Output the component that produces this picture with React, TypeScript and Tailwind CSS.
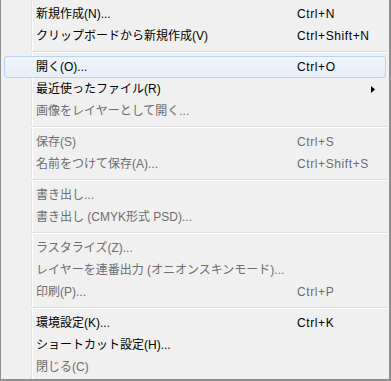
type Item =
  | { sep: true }
  | {
      sep?: false;
      label: string;
      shortcut?: string;
      disabled?: boolean;
      active?: boolean;
      submenu?: boolean;
    };

const items: Item[] = [
  { label: "新規作成(N)...", shortcut: "Ctrl+N" },
  { label: "クリップボードから新規作成(V)", shortcut: "Ctrl+Shift+N" },
  { sep: true },
  { label: "開く(O)...", shortcut: "Ctrl+O", active: true },
  { label: "最近使ったファイル(R)", submenu: true },
  { label: "画像をレイヤーとして開く...", disabled: true },
  { sep: true },
  { label: "保存(S)", shortcut: "Ctrl+S", disabled: true },
  { label: "名前をつけて保存(A)...", shortcut: "Ctrl+Shift+S", disabled: true },
  { sep: true },
  { label: "書き出し...", disabled: true },
  { label: "書き出し (CMYK形式 PSD)...", disabled: true },
  { sep: true },
  { label: "ラスタライズ(Z)...", disabled: true },
  { label: "レイヤーを連番出力 (オニオンスキンモード)...", disabled: true },
  { label: "印刷(P)...", shortcut: "Ctrl+P", disabled: true },
  { sep: true },
  { label: "環境設定(K)...", shortcut: "Ctrl+K" },
  { label: "ショートカット設定(H)..." },
  { label: "閉じる(C)", disabled: true },
];

export default function App() {
  return (
    <div
      className="w-[391px] h-[381px] bg-[#f0f0f0] border-l border-r-2 border-b-2 border-[#8f8f8f] text-[12px] leading-none overflow-hidden"
      style={{ fontFamily: '"Liberation Sans", "Noto Sans CJK JP", sans-serif' }}
    >
      <div className="pt-[3px] h-full bg-[linear-gradient(to_right,transparent_30px,#e2e3e3_30px,#e2e3e3_31px,#ffffff_31px,#ffffff_32px,transparent_32px)]">
        {items.map((it, i) =>
          it.sep ? (
            <div key={i} className="h-[9px] flex flex-col justify-center ml-[30px] mr-[2px]">
              <div className="h-px bg-[#e0e0e0]" />
              <div className="h-px bg-white" />
            </div>
          ) : (
            <div
              key={i}
              className={`h-[22px] mx-[3px] flex items-center pl-[31px] rounded-[3px] border ${
                it.active
                  ? "border-[#b7d4f5] bg-[linear-gradient(to_bottom,#f1f5fb,#e6eef9)]"
                  : "border-transparent"
              } ${it.disabled ? "text-[#6d6d6d]" : "text-black"}`}
            >
              <span className="w-[261px] whitespace-nowrap">{it.label}</span>
              <span className="whitespace-nowrap tracking-[0.6px]">{it.shortcut}</span>
              {it.submenu && (
                <svg className="ml-[74px]" width="4" height="7" viewBox="0 0 4 7">
                  <path d="M0 0 L4 3.5 L0 7 Z" fill="#000" />
                </svg>
              )}
            </div>
          )
        )}
      </div>
    </div>
  );
}
